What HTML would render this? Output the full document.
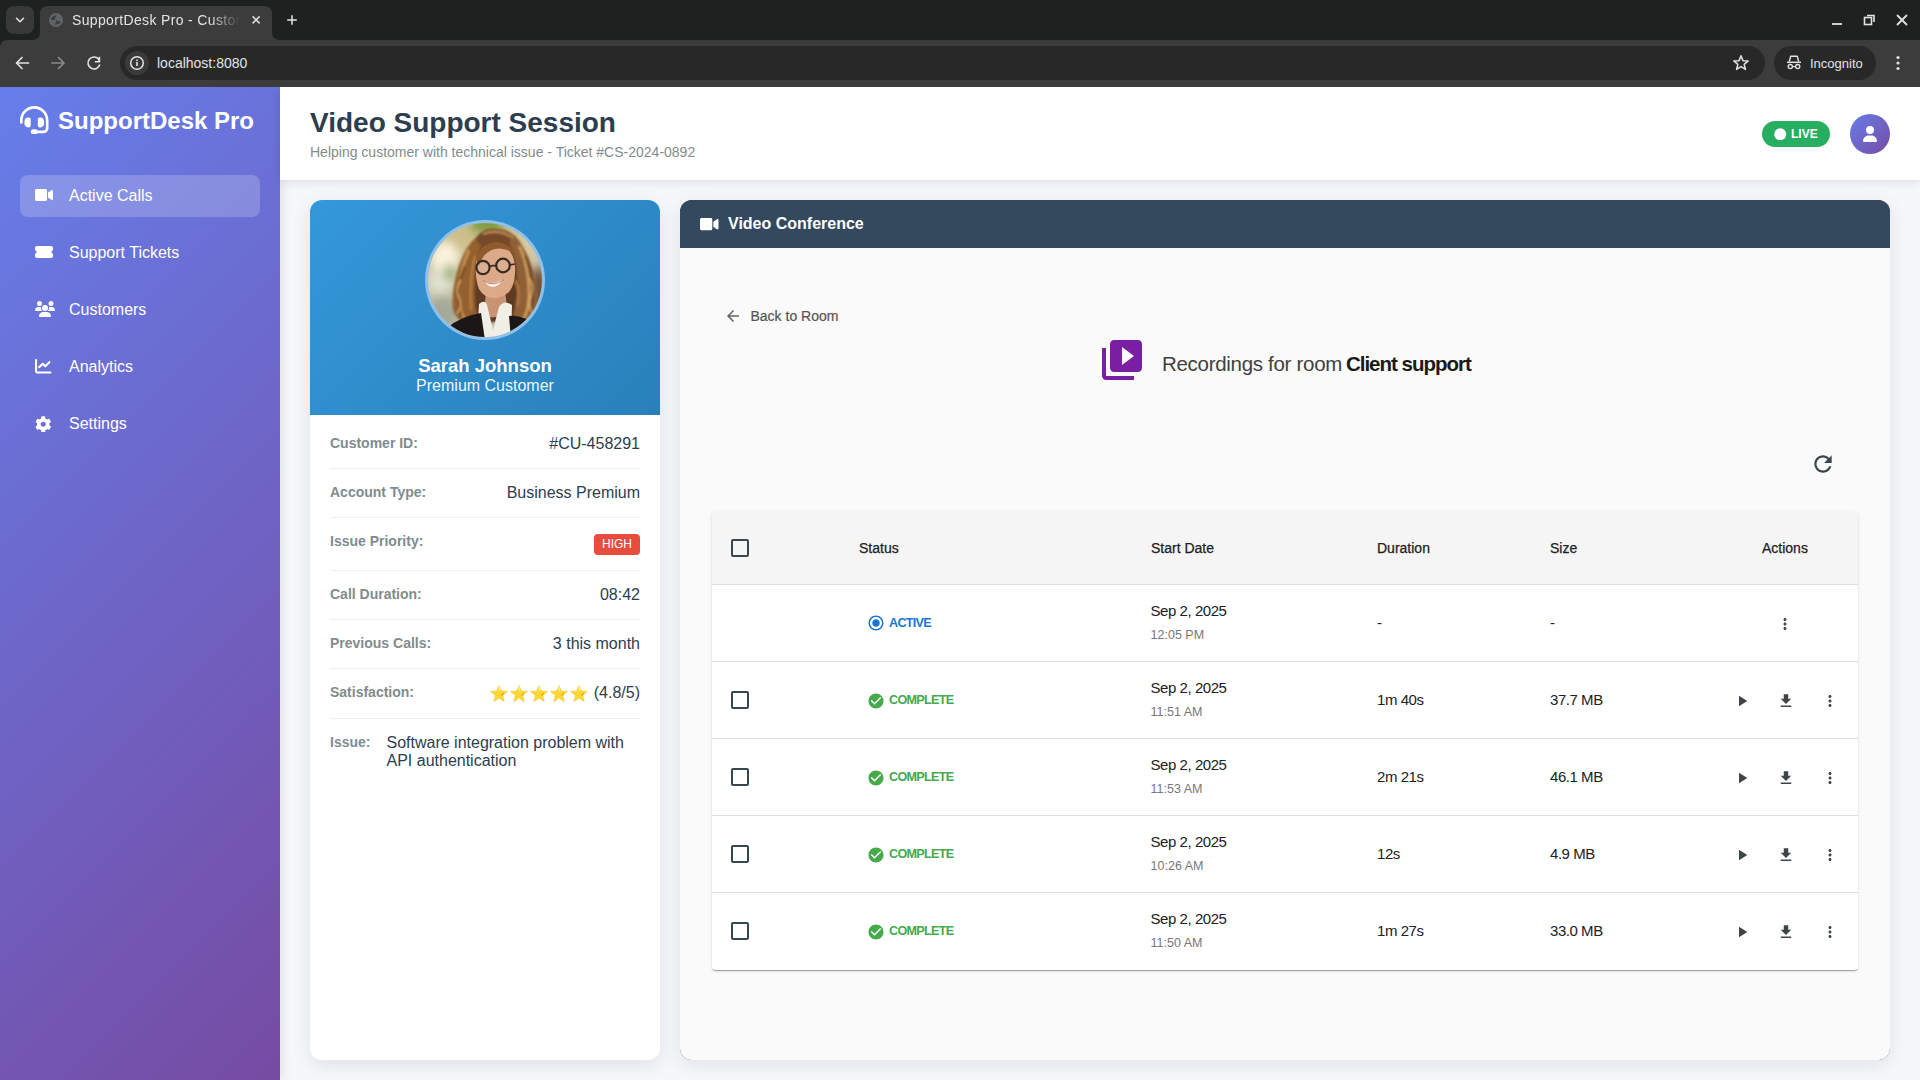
<!DOCTYPE html>
<html><head><meta charset="utf-8">
<style>
*{box-sizing:border-box;margin:0;padding:0}
html,body{width:1920px;height:1080px;overflow:hidden;font-family:"Liberation Sans",sans-serif;background:#f5f7fa}
.abs{position:absolute}
svg{display:block}
/* chrome */
#tabstrip{left:0;top:0;width:1920px;height:40px;background:#1f2020}
#toolbar{left:0;top:40px;width:1920px;height:47px;background:#3c3c3c}
#omnibox{left:120px;top:46px;width:1645px;height:34px;border-radius:17px;background:#282828}
#page{left:0;top:87px;width:1920px;height:993px;background:#f5f7fa;overflow:hidden}
/* sidebar */
#sidebar{left:0;top:0;width:280px;height:993px;background:linear-gradient(135deg,#667eea 0%,#764ba2 100%);box-shadow:2px 0 10px rgba(0,0,0,0.1);z-index:3}
.nav{position:absolute;left:20px;width:240px;height:42px;border-radius:8px;color:#fff;font-size:16px}
.nav.active{background:rgba(255,255,255,0.2)}
.nav span{position:absolute;left:49px;top:12px;line-height:18px}
.nav svg{position:absolute;fill:#fff}
/* header */
#header{left:280px;top:0;width:1640px;height:93px;background:#fff;box-shadow:0 2px 10px rgba(0,0,0,0.1);z-index:4}

/* customer card */
#card{left:310px;top:113px;width:350px;height:860px;background:#fff;border-radius:12px;box-shadow:0 5px 20px rgba(0,0,0,0.09);overflow:hidden}
#cardtop{left:0;top:0;width:350px;height:215px;background:linear-gradient(135deg,#3498db,#2980b9)}
.row{position:absolute;left:20px;width:310px;border-bottom:1px solid #ecf0f1}
.row .l{position:absolute;left:0;font-size:14px;font-weight:700;color:#7f8c8d;line-height:16px}
.row .v{position:absolute;right:0;font-size:16px;color:#2c3e50;line-height:18px}
/* video panel */
#panel{left:680px;top:113px;width:1210px;height:860px;background:#34495e;border-radius:12px;box-shadow:0 5px 20px rgba(0,0,0,0.09);overflow:hidden}
#phead{left:0;top:0;width:1210px;height:48px;background:#34495e}

.th{position:absolute;top:0;font-size:14px;font-weight:500;color:#212121;line-height:16px}
.tr{position:absolute;left:0;width:1146px;height:77px;border-top:1px solid #e0e0e0;background:#fff}
.td{position:absolute;font-size:15px;letter-spacing:-0.45px;color:#212121;line-height:17px}
.tm{position:absolute;font-size:12.5px;color:#777;line-height:14px}
.chip{position:absolute;font-size:12.6px;font-weight:700;letter-spacing:-0.7px;line-height:14px}
.ic{position:absolute}
.th{-webkit-text-stroke:0.25px #212121}
</style></head>
<body>
<!-- ============ BROWSER CHROME ============ -->
<div id="tabstrip" class="abs"></div>
<div id="toolbar" class="abs"></div>
<svg class="abs" style="left:0;top:0" width="1920" height="87">
  <path d="M0 40 L8 40 Q0 40 0 48 Z" fill="#1f2020"/>
  <!-- dropdown btn -->
  <rect x="6" y="6" width="28" height="28" rx="8" fill="#383838"/>
  <path d="M16.5 18.3 L20 21.7 L23.5 18.3" fill="none" stroke="#e3e3e3" stroke-width="1.6" stroke-linecap="round" stroke-linejoin="round"/>
  <!-- active tab -->
  <path d="M32 40 Q40 40 40 32 L40 14 Q40 6 48 6 L264 6 Q272 6 272 14 L272 32 Q272 40 280 40 Z" fill="#3c3c3c"/>
  <!-- globe -->
  <circle cx="56" cy="20" r="7" fill="#5f6368"/>
  <path d="M51.6 17.6 Q53 15.6 56.8 15.2 Q55.2 16.6 54.9 18 Q54.8 19.2 55.6 19.8 L51.2 19.9 Q51.2 18.6 51.6 17.6 Z" fill="#3c3c3c"/>
  <path d="M55.6 19.7 Q57.3 20.2 57.9 21.3 Q59 21.6 60.9 21 Q60.6 22.6 59.2 23.7 Q57.3 24.7 54.3 24.5 Q55.9 23.4 56.2 22 Q56.3 20.6 55.6 19.7 Z" fill="#3c3c3c"/>
  <!-- close x -->
  <path d="M252.6 16.4 L259.6 23.4 M259.6 16.4 L252.6 23.4" stroke="#e3e3e3" stroke-width="1.5"/>
  <!-- plus -->
  <path d="M292 15.2 L292 24.8 M287.2 20 L296.8 20" stroke="#e3e3e3" stroke-width="1.5"/>
  <!-- window controls -->
  <path d="M1832 24 L1842 24" stroke="#e3e3e3" stroke-width="1.8"/>
  <rect x="1864.5" y="17.5" width="7" height="7" fill="none" stroke="#e3e3e3" stroke-width="1.6"/>
  <path d="M1867 15.5 L1874 15.5 L1874 22" fill="none" stroke="#e3e3e3" stroke-width="1.6"/>
  <path d="M1897.5 15.5 L1906.5 24.5 M1906.5 15.5 L1897.5 24.5" stroke="#e3e3e3" stroke-width="1.8" stroke-linecap="round"/>
  <!-- back / fwd / reload -->
  <path d="M28.5 63 L16.5 63 M22 57.5 L16.5 63 L22 68.5" fill="none" stroke="#e3e3e3" stroke-width="1.7" stroke-linecap="round" stroke-linejoin="round"/>
  <path d="M52 63 L64 63 M58.5 57.5 L64 63 L58.5 68.5" fill="none" stroke="#8a8a8a" stroke-width="1.7" stroke-linecap="round" stroke-linejoin="round"/>
  <path d="M99.8 64.5 A6 6 0 1 1 98.6 59.1 L99.4 61" fill="none" stroke="#e3e3e3" stroke-width="1.6"/>
  <path d="M99.4 56.8 L99.4 61.8 L94.8 61.8" fill="none" stroke="#e3e3e3" stroke-width="1.6"/>
  <!-- omnibox -->
  <rect x="120" y="46" width="1645" height="34" rx="17" fill="#282828"/>
  <circle cx="137" cy="63" r="12" fill="#3a3a3a"/>
  <circle cx="137" cy="63" r="6.3" fill="none" stroke="#e3e3e3" stroke-width="1.5"/>
  <rect x="136.2" y="62" width="1.6" height="4" fill="#e3e3e3"/>
  <rect x="136.2" y="59.6" width="1.6" height="1.5" fill="#e3e3e3"/>
  <!-- star -->
  <path d="M1741.00 55.70 L1742.94 60.63 L1748.23 60.95 L1744.14 64.32 L1745.47 69.45 L1741.00 66.60 L1736.53 69.45 L1737.86 64.32 L1733.77 60.95 L1739.06 60.63 Z" fill="none" stroke="#e3e3e3" stroke-width="1.5" stroke-linejoin="round"/>
  <!-- incognito pill -->
  <rect x="1774" y="46" width="102" height="34" rx="17" fill="#282828"/>
  <path d="M1787 62.3 L1801 62.3" stroke="#e3e3e3" stroke-width="1.5"/>
  <path d="M1789.3 61.5 L1790.7 56.3 L1797.2 56.3 L1798.7 61.5" fill="none" stroke="#e3e3e3" stroke-width="1.4" stroke-linejoin="round"/>
  <circle cx="1790.3" cy="66.6" r="2.1" fill="none" stroke="#e3e3e3" stroke-width="1.3"/>
  <circle cx="1797.7" cy="66.6" r="2.1" fill="none" stroke="#e3e3e3" stroke-width="1.3"/>
  <path d="M1792.4 66.6 L1795.6 66.6" stroke="#e3e3e3" stroke-width="1.2"/>
  <!-- kebab -->
  <circle cx="1898" cy="57.5" r="1.6" fill="#e3e3e3"/>
  <circle cx="1898" cy="63" r="1.6" fill="#e3e3e3"/>
  <circle cx="1898" cy="68.5" r="1.6" fill="#e3e3e3"/>
</svg>
<div class="abs" style="left:72px;top:11px;width:168px;height:18px;overflow:hidden;white-space:nowrap;font-size:14px;letter-spacing:0.35px;line-height:18px;color:#e3e3e3;-webkit-mask-image:linear-gradient(90deg,#000 82%,transparent 100%)">SupportDesk Pro - Customer Support</div>
<div class="abs" style="left:157px;top:54px;font-size:14px;line-height:18px;color:#e3e3e3">localhost:8080</div>
<div class="abs" style="left:1810px;top:56px;font-size:13px;line-height:16px;color:#e3e3e3">Incognito</div>

<!-- ============ PAGE ============ -->
<div id="page" class="abs">
  <div id="sidebar" class="abs">
    <svg class="abs" style="left:20px;top:18.9px" width="28.5" height="28.5" viewBox="0 0 512 512"><path fill="#fff" d="M256 48C141.1 48 48 141.1 48 256v40c0 13.3-10.7 24-24 24s-24-10.7-24-24V256C0 114.6 114.6 0 256 0S512 114.6 512 256V400.1c0 48.6-39.4 88-88.1 88L313.6 488c-8.3 14.3-23.8 24-41.6 24H240c-26.5 0-48-21.5-48-48s21.5-48 48-48h32c17.8 0 33.3 9.7 41.6 24l110.4 .1c22.1 0 40-17.9 40-40V256c0-114.9-93.1-208-208-208zM144 208h16c17.7 0 32 14.3 32 32V352c0 17.7-14.3 32-32 32H144c-35.3 0-64-28.7-64-64V272c0-35.3 28.7-64 64-64zm224 0c35.3 0 64 28.7 64 64v48c0 35.3-28.7 64-64 64H352c-17.7 0-32-14.3-32-32V240c0-17.7 14.3-32 32-32h16z"/></svg>
    <div class="abs" style="left:58px;top:19.8px;font-size:24px;line-height:28px;font-weight:700;color:#fff">SupportDesk Pro</div>
    <div class="nav active" style="top:88px">
      <svg style="left:15px;top:12px" width="18" height="16" viewBox="0 0 576 512"><path d="M336.2 64H47.8C21.4 64 0 85.4 0 111.8v288.4C0 426.6 21.4 448 47.8 448h288.4c26.4 0 47.8-21.4 47.8-47.8V111.8c0-26.4-21.4-47.8-47.8-47.8zm189.4 37.7L416 177.3v157.4l109.6 75.5c21.2 14.6 50.4-.3 50.4-25.8V127.5c0-25.4-29.1-40.4-50.4-25.8z"/></svg>
      <span>Active Calls</span>
    </div>
    <div class="nav" style="top:145px">
      <svg style="left:15px;top:12px" width="18" height="16" viewBox="0 0 576 512"><path d="M64 64C28.7 64 0 92.7 0 128v64c0 8.8 7.4 15.7 15.7 18.6C34.5 217.1 48 235 48 256s-13.5 38.9-32.3 45.4C7.4 304.3 0 311.2 0 320v64c0 35.3 28.7 64 64 64H512c35.3 0 64-28.7 64-64V320c0-8.8-7.4-15.7-15.7-18.6C541.5 294.9 528 277 528 256s13.5-38.9 32.3-45.4c8.3-2.9 15.7-9.8 15.7-18.6V128c0-35.3-28.7-64-64-64H64z"/></svg>
      <span>Support Tickets</span>
    </div>
    <div class="nav" style="top:202px">
      <svg style="left:15px;top:12px" width="20" height="16" viewBox="0 0 640 512"><path d="M144 0a80 80 0 1 1 0 160A80 80 0 1 1 144 0zM512 0a80 80 0 1 1 0 160A80 80 0 1 1 512 0zM0 298.7C0 239.8 47.8 192 106.7 192h42.7c15.9 0 31 3.5 44.6 9.7c-1.3 7.2-1.9 14.7-1.9 22.3c0 38.2 16.8 72.5 43.3 96c-.2 0-.4 0-.7 0H21.3C9.6 320 0 310.4 0 298.7zM405.3 320c-.2 0-.4 0-.7 0c26.6-23.5 43.3-57.8 43.3-96c0-7.6-.7-15-1.9-22.3c13.6-6.3 28.7-9.7 44.6-9.7h42.7C592.2 192 640 239.8 640 298.7c0 11.8-9.6 21.3-21.3 21.3H405.3zM224 224a96 96 0 1 1 192 0 96 96 0 1 1 -192 0zM128 485.3C128 411.7 187.7 352 261.3 352H378.7C452.3 352 512 411.7 512 485.3c0 14.7-11.9 26.7-26.7 26.7H154.7c-14.7 0-26.7-11.9-26.7-26.7z"/></svg>
      <span>Customers</span>
    </div>
    <div class="nav" style="top:259px">
      <svg style="left:15px;top:11.5px" width="16.5" height="16.5" viewBox="0 0 512 512"><path d="M64 64c0-17.7-14.3-32-32-32S0 46.3 0 64V400c0 44.2 35.8 80 80 80H480c17.7 0 32-14.3 32-32s-14.3-32-32-32H80c-8.8 0-16-7.2-16-16V64zm406.6 86.6c12.5-12.5 12.5-32.8 0-45.3s-32.8-12.5-45.3 0L320 210.7l-57.4-57.4c-12.5-12.5-32.8-12.5-45.3 0l-112 112c-12.5 12.5-12.5 32.8 0 45.3s32.8 12.5 45.3 0L240 221.3l57.4 57.4c12.5 12.5 32.8 12.5 45.3 0l128-128z"/></svg>
      <span>Analytics</span>
    </div>
    <div class="nav" style="top:316px">
      <svg style="left:15px;top:12.5px" width="16.5" height="16.5" viewBox="0 0 512 512"><path d="M487.4 315.7l-42.6-24.6c4.3-23.2 4.3-47 0-70.2l42.6-24.6c4.9-2.8 7.1-8.6 5.5-14-11.1-35.6-30-67.8-54.7-94.6-3.8-4.1-10-5.1-14.8-2.3L380.8 110c-17.9-15.4-38.5-27.3-60.8-35.1V25.8c0-5.6-3.9-10.5-9.4-11.7-36.7-8.2-74.3-7.8-109.2 0-5.5 1.2-9.4 6.1-9.4 11.7V75c-22.2 7.900-42.8 19.8-60.8 35.1L88.7 85.5c-4.9-2.8-11-1.9-14.8 2.3-24.7 26.7-43.6 58.9-54.7 94.6-1.7 5.4.6 11.2 5.5 14L67.3 221c-4.3 23.2-4.3 47 0 70.2l-42.6 24.6c-4.9 2.8-7.1 8.6-5.5 14 11.1 35.6 30 67.8 54.7 94.6 3.8 4.1 10 5.1 14.8 2.3l42.6-24.6c17.9 15.4 38.5 27.3 60.8 35.1v49.2c0 5.6 3.9 10.5 9.4 11.7 36.7 8.2 74.3 7.8 109.2 0 5.5-1.200 9.4-6.1 9.4-11.7v-49.2c22.2-7.9 42.8-19.8 60.8-35.1l42.6 24.6c4.9 2.8 11 1.9 14.8-2.3 24.7-26.7 43.6-58.9 54.7-94.6 1.5-5.5-.7-11.3-5.6-14.1zM256 336c-44.1 0-80-35.9-80-80s35.9-80 80-80 80 35.9 80 80-35.9 80-80 80z"/></svg>
      <span>Settings</span>
    </div>
  </div>
<div id="card" class="abs">
    <div id="cardtop" class="abs"></div>
    <svg class="abs" style="left:115px;top:20px" width="120" height="120" viewBox="0 0 120 120">
      <defs>
        <clipPath id="pc"><circle cx="60" cy="60" r="57"/></clipPath>
        <filter id="bl" x="-30%" y="-30%" width="160%" height="160%"><feGaussianBlur stdDeviation="5"/></filter>
        <filter id="bl2" x="-20%" y="-20%" width="140%" height="140%"><feGaussianBlur stdDeviation="1.1"/></filter>
        <filter id="bl3" x="-20%" y="-20%" width="140%" height="140%"><feGaussianBlur stdDeviation="0.6"/></filter>
      </defs>
      <circle cx="60" cy="60" r="60" fill="#8ec0ea"/>
      <g clip-path="url(#pc)">
        <rect x="0" y="0" width="120" height="120" fill="#c9c3a6"/>
        <g filter="url(#bl)">
          <rect x="0" y="0" width="120" height="34" fill="#cdbf8c"/>
          <ellipse cx="62" cy="5" rx="18" ry="9" fill="#7e9c3e"/>
          <ellipse cx="20" cy="38" rx="14" ry="16" fill="#faf3dc"/>
          <ellipse cx="15" cy="62" rx="12" ry="12" fill="#dfe2d0"/>
          <ellipse cx="24" cy="52" rx="5" ry="8" fill="#8fa868"/>
          <ellipse cx="18" cy="92" rx="18" ry="16" fill="#a4aa98"/>
          <ellipse cx="104" cy="24" rx="12" ry="14" fill="#d6c8a0"/>
          <ellipse cx="114" cy="70" rx="8" ry="24" fill="#6a4a30"/>
        </g>
        <g filter="url(#bl2)">
          <path d="M46 30 Q54 14 70 14 Q88 14 94 30 L96 100 L46 104 Z" fill="#5e3a20"/>
          <path d="M60 10 Q78 6 90 16 Q100 26 104 44 L92 46 Q86 28 70 24 Q58 24 52 36 L44 34 Q48 16 60 10 Z" fill="#74492a"/>
          <path d="M50 18 Q38 30 32 52 Q26 74 28 90 Q32 102 46 106 L54 102 Q48 84 50 62 Q50 40 56 26 Z" fill="#94602f"/>
          <path d="M88 16 Q102 28 108 50 Q114 74 110 92 Q104 104 92 104 L88 96 Q94 76 92 54 Q90 34 84 22 Z" fill="#8f6036"/>
          <path d="M44 30 Q34 52 34 76 Q34 92 42 102" fill="none" stroke="#d29a58" stroke-width="2.2"/>
          <path d="M40 46 Q30 70 36 96" fill="none" stroke="#5e3618" stroke-width="1.8"/>
          <path d="M50 36 Q44 60 46 90" fill="none" stroke="#c48848" stroke-width="1.6"/>
          <path d="M94 26 Q104 46 104 74 Q104 90 98 100" fill="none" stroke="#d4a464" stroke-width="2.2"/>
          <path d="M100 36 Q112 62 106 94" fill="none" stroke="#6a3e1c" stroke-width="1.8"/>
          <path d="M58 14 Q74 8 88 18" fill="none" stroke="#c49058" stroke-width="2"/>
          <path d="M36 60 Q30 68 34 78 Q38 86 32 94" fill="none" stroke="#e0b070" stroke-width="1.4"/>
          <path d="M104 58 Q110 66 106 76 Q102 86 108 94" fill="none" stroke="#e0b070" stroke-width="1.4"/>
          <path d="M90 60 Q96 72 92 86" fill="none" stroke="#b87c42" stroke-width="2"/>
        </g>
        <g filter="url(#bl3)">
          <path d="M61 70 L80 70 L83 96 L59 98 Z" fill="#c99476"/>
          <path d="M51 46 Q51 26 69 24 Q88 25 90 46 Q91 63 84 72 Q76 78.5 68 78 Q59 77.5 54 69 Q50 59 51 46 Z" fill="#dcaa88"/>
          <path d="M51 40 Q54 24 70 22 Q84 22 90 34 Q80 27 70 29 Q58 32 54 46 Z" fill="#8e5a2e"/>
          <path d="M59.5 61 Q68 65.5 77.5 59.5 Q74 66.5 68 67 Q62 66.5 59.5 61 Z" fill="#f6f1e8"/>
          <path d="M58 60.5 Q68 67.5 79 59.5" fill="none" stroke="#b06a5a" stroke-width="0.8"/>
          <circle cx="58" cy="47.5" r="6.6" fill="rgba(210,190,170,0.25)" stroke="#3a2a22" stroke-width="2.2"/>
          <circle cx="78" cy="45.5" r="6.8" fill="rgba(210,190,170,0.25)" stroke="#3a2a22" stroke-width="2.2"/>
          <path d="M64.3 46.5 Q68 45 71.3 46" fill="none" stroke="#3a2a22" stroke-width="1.6"/>
          <path d="M84.6 45 L90 44" stroke="#3a2a22" stroke-width="1.6"/>
          <path d="M54 84 Q60 79 62 85 L68 110 L74 87 Q79 79 87 85 L86 120 L52 120 Z" fill="#f0efe6"/>
          <path d="M22 108 Q36 96 56 93 L60 120 L22 120 Z" fill="#1c1918"/>
          <path d="M84 96 Q98 94 110 106 L110 120 L86 120 Z" fill="#1c1918"/>
        </g>
      </g>
    </svg>
    <div class="abs" style="left:0;top:155px;width:350px;text-align:center;font-size:18.5px;line-height:21px;font-weight:700;color:#fff">Sarah Johnson</div>
    <div class="abs" style="left:0;top:177px;width:350px;text-align:center;font-size:16px;line-height:18px;color:rgba(255,255,255,0.95)">Premium Customer</div>
    <div class="row" style="top:219px;height:50px"><span class="l" style="top:16px">Customer ID:</span><span class="v" style="top:16px">#CU-458291</span></div>
    <div class="row" style="top:268px;height:50px"><span class="l" style="top:16px">Account Type:</span><span class="v" style="top:16px">Business Premium</span></div>
    <div class="row" style="top:318px;height:53px"><span class="l" style="top:15px">Issue Priority:</span><span class="abs" style="right:0;top:15.5px;width:46px;height:21.5px;border-radius:4px;background:#e74c3c;color:#fff;font-size:12px;line-height:21.5px;text-align:center">HIGH</span></div>
    <div class="row" style="top:370px;height:50px"><span class="l" style="top:16px">Call Duration:</span><span class="v" style="top:16px">08:42</span></div>
    <div class="row" style="top:419px;height:50px"><span class="l" style="top:16px">Previous Calls:</span><span class="v" style="top:16px">3 this month</span></div>
    <div class="row" style="top:468px;height:51px"><span class="l" style="top:16px">Satisfaction:</span><span class="v" style="top:16px">(4.8/5)</span></div>
    <svg class="abs" style="left:180.4px;top:485px" width="100" height="18"><g transform="translate(0,0)"><path d="M9 0.3 L11.3 6 L17.6 6.4 L12.7 10.4 L14.3 16.7 L9 13.3 L3.7 16.7 L5.3 10.4 L0.4 6.4 L6.7 6 Z" fill="#fdd835" stroke="#f2c230" stroke-width="0.5" stroke-linejoin="round"/><path d="M13.5 8.5 L11.8 10.3" stroke="#f0a800" stroke-width="1.3" stroke-linecap="round"/><path d="M9 1.5 L9.6 5.5" stroke="#fff59d" stroke-width="1" stroke-linecap="round"/></g><g transform="translate(20,0)"><path d="M9 0.3 L11.3 6 L17.6 6.4 L12.7 10.4 L14.3 16.7 L9 13.3 L3.7 16.7 L5.3 10.4 L0.4 6.4 L6.7 6 Z" fill="#fdd835" stroke="#f2c230" stroke-width="0.5" stroke-linejoin="round"/><path d="M13.5 8.5 L11.8 10.3" stroke="#f0a800" stroke-width="1.3" stroke-linecap="round"/><path d="M9 1.5 L9.6 5.5" stroke="#fff59d" stroke-width="1" stroke-linecap="round"/></g><g transform="translate(40,0)"><path d="M9 0.3 L11.3 6 L17.6 6.4 L12.7 10.4 L14.3 16.7 L9 13.3 L3.7 16.7 L5.3 10.4 L0.4 6.4 L6.7 6 Z" fill="#fdd835" stroke="#f2c230" stroke-width="0.5" stroke-linejoin="round"/><path d="M13.5 8.5 L11.8 10.3" stroke="#f0a800" stroke-width="1.3" stroke-linecap="round"/><path d="M9 1.5 L9.6 5.5" stroke="#fff59d" stroke-width="1" stroke-linecap="round"/></g><g transform="translate(60,0)"><path d="M9 0.3 L11.3 6 L17.6 6.4 L12.7 10.4 L14.3 16.7 L9 13.3 L3.7 16.7 L5.3 10.4 L0.4 6.4 L6.7 6 Z" fill="#fdd835" stroke="#f2c230" stroke-width="0.5" stroke-linejoin="round"/><path d="M13.5 8.5 L11.8 10.3" stroke="#f0a800" stroke-width="1.3" stroke-linecap="round"/><path d="M9 1.5 L9.6 5.5" stroke="#fff59d" stroke-width="1" stroke-linecap="round"/></g><g transform="translate(80,0)"><path d="M9 0.3 L11.3 6 L17.6 6.4 L12.7 10.4 L14.3 16.7 L9 13.3 L3.7 16.7 L5.3 10.4 L0.4 6.4 L6.7 6 Z" fill="#fdd835" stroke="#f2c230" stroke-width="0.5" stroke-linejoin="round"/><path d="M13.5 8.5 L11.8 10.3" stroke="#f0a800" stroke-width="1.3" stroke-linecap="round"/><path d="M9 1.5 L9.6 5.5" stroke="#fff59d" stroke-width="1" stroke-linecap="round"/></g></svg>
    <div class="abs" style="left:20px;top:534px;font-size:14px;font-weight:700;color:#7f8c8d;line-height:16px">Issue:</div>
    <div class="abs" style="left:76.5px;top:534px;width:250px;font-size:16px;color:#2c3e50;line-height:18px">Software integration problem with API authentication</div>
  </div>
  <div id="panel" class="abs">
    <div class="abs" style="left:0;top:48px;width:1210px;height:812px;background:#fafafa"></div>
    <div id="phead" class="abs">
      <svg class="abs" style="left:20px;top:16px" width="18.5" height="16.4" viewBox="0 0 576 512" fill="#fff"><path d="M336.2 64H47.8C21.4 64 0 85.4 0 111.8v288.4C0 426.6 21.4 448 47.8 448h288.4c26.4 0 47.8-21.4 47.8-47.8V111.8c0-26.4-21.4-47.8-47.8-47.8zm189.4 37.7L416 177.3v157.4l109.6 75.5c21.2 14.6 50.4-.3 50.4-25.8V127.5c0-25.4-29.1-40.4-50.4-25.8z"/></svg>
      <div class="abs" style="left:48px;top:15px;font-size:16px;line-height:18px;font-weight:700;color:#fff">Video Conference</div>
    </div>
    <svg class="ic" style="left:44px;top:107px" width="18" height="18" viewBox="0 0 24 24" fill="#666"><path d="M20 11H7.83l5.59-5.59L12 4l-8 8 8 8 1.41-1.41L7.83 13H20v-2z"/></svg>
    <div class="abs" style="left:70.5px;top:108px;font-size:14px;line-height:16px;color:#555;-webkit-text-stroke:0.2px #555">Back to Room</div>
    <svg class="abs" style="left:417.5px;top:136px" width="48" height="48" viewBox="0 0 24 24" fill="#7b1fa2"><path d="M4 6H2v14c0 1.1.9 2 2 2h14v-2H4V6zm16-4H8c-1.1 0-2 .9-2 2v12c0 1.1.9 2 2 2h12c1.1 0 2-.9 2-2V4c0-1.1-.9-2-2-2zm-8 12.5v-9l6 4.5-6 4.5z"/></svg>
    <div class="abs" style="left:482px;top:151.5px;font-size:20.5px;letter-spacing:-0.3px;line-height:23px;color:#404040;white-space:nowrap">Recordings for room <b style="letter-spacing:-1px;margin-left:-1.5px;color:#1a1a1a">Client support</b></div>
    <svg class="ic" style="left:1129.5px;top:251px" width="26" height="26" viewBox="0 0 24 24" fill="#37474f"><path d="M17.65 6.35C16.2 4.9 14.21 4 12 4c-4.42 0-7.99 3.58-7.99 8s3.57 8 7.99 8c3.73 0 6.84-2.55 7.73-6h-2.08c-.82 2.33-3.04 4-5.65 4-3.31 0-6-2.690-6-6s2.69-6 6-6c1.66 0 3.14.69 4.22 1.78L13 11h7V4l-2.35 2.35z"/></svg>
    <div class="abs" style="left:32px;top:311px;width:1146px;height:459px;border-radius:4px;overflow:hidden;background:#fff;box-shadow:0 2px 1px -1px rgba(0,0,0,0.2),0 1px 1px 0 rgba(0,0,0,0.14),0 1px 3px 0 rgba(0,0,0,0.12)">
      <div class="abs" style="left:0;top:0;width:1146px;height:73px;background:#f5f5f5">
        <svg class="ic" style="left:16px;top:24.5px" width="24" height="24" viewBox="0 0 24 24" fill="#37474f"><path d="M19 5v14H5V5h14m0-2H5c-1.11 0-2 .9-2 2v14c0 1.1.89 2 2 2h14c1.1 0 2-.9 2-2V5c0-1.1-.9-2-2-2z"/></svg>
        <span class="th" style="left:147px;top:29px">Status</span>
        <span class="th" style="left:439px;top:29px">Start Date</span>
        <span class="th" style="left:665px;top:29px">Duration</span>
        <span class="th" style="left:838px;top:29px">Size</span>
        <span class="th" style="left:1050px;top:29px">Actions</span>
      </div>
<div class="tr" style="top:73px"><svg class="ic" style="left:155px;top:29px" width="18" height="18" viewBox="0 0 24 24" fill="#1976d2"><path d="M12 7c-2.76 0-5 2.24-5 5s2.24 5 5 5 5-2.24 5-5-2.24-5-5-5zm0-5C6.48 2 2 6.48 2 12s4.48 10 10 10 10-4.48 10-10S17.52 2 12 2zm0 18c-4.42 0-8-3.58-8-8s3.58-8 8-8 8 3.58 8 8-3.58 8-8 8z"/></svg><span class="chip" style="left:177px;top:31px;color:#1976d2">ACTIVE</span><span class="td" style="left:438.5px;top:16.5px">Sep 2, 2025</span><span class="tm" style="left:438.6px;top:43.3px">12:05 PM</span><span class="td" style="left:665px;top:28.5px">-</span><span class="td" style="left:838px;top:28.5px">-</span><svg class="ic" style="left:1064px;top:29.5px" width="18" height="18" viewBox="0 0 24 24" fill="#3d4548"><path d="M12 8c1.1 0 2-.9 2-2s-.9-2-2-2-2 .9-2 2 .9 2 2 2zm0 2c-1.1 0-2 .9-2 2s.9 2 2 2 2-.9 2-2-.9-2-2-2zm0 6c-1.1 0-2 .9-2 2s.9 2 2 2 2-.9 2-2-.9-2-2-2z"/></svg></div>
<div class="tr" style="top:150px"><svg class="ic" style="left:16px;top:26px" width="24" height="24" viewBox="0 0 24 24" fill="#37474f"><path d="M19 5v14H5V5h14m0-2H5c-1.11 0-2 .9-2 2v14c0 1.1.89 2 2 2h14c1.1 0 2-.9 2-2V5c0-1.1-.9-2-2-2z"/></svg><svg class="ic" style="left:154.79999999999995px;top:29.5px" width="18" height="18" viewBox="0 0 24 24" fill="#46a94a"><path d="M12 2C6.48 2 2 6.48 2 12s4.48 10 10 10 10-4.48 10-10S17.52 2 12 2zm-2 15l-5-5 1.41-1.41L10 14.17l7.59-7.59L19 8l-9 9z"/></svg><span class="chip" style="left:177px;top:31px;color:#46a94a">COMPLETE</span><span class="td" style="left:438.5px;top:16.5px">Sep 2, 2025</span><span class="tm" style="left:438.6px;top:43.3px">11:51 AM</span><span class="td" style="left:665px;top:28.5px">1m 40s</span><span class="td" style="left:838px;top:28.5px">37.7 MB</span><svg class="ic" style="left:1021px;top:29.5px" width="18" height="18" viewBox="0 0 24 24" fill="#3d4548"><path d="M8 5v14l11-7z"/></svg><svg class="ic" style="left:1065px;top:29.5px" width="18" height="18" viewBox="0 0 24 24" fill="#3d4548"><path d="M19 9h-4V3H9v6H5l7 7 7-7zM5 18v2h14v-2H5z"/></svg><svg class="ic" style="left:1109px;top:29.5px" width="18" height="18" viewBox="0 0 24 24" fill="#3d4548"><path d="M12 8c1.1 0 2-.9 2-2s-.9-2-2-2-2 .9-2 2 .9 2 2 2zm0 2c-1.1 0-2 .9-2 2s.9 2 2 2 2-.9 2-2-.9-2-2-2zm0 6c-1.1 0-2 .9-2 2s.9 2 2 2 2-.9 2-2-.9-2-2-2z"/></svg></div>
<div class="tr" style="top:227px"><svg class="ic" style="left:16px;top:26px" width="24" height="24" viewBox="0 0 24 24" fill="#37474f"><path d="M19 5v14H5V5h14m0-2H5c-1.11 0-2 .9-2 2v14c0 1.1.89 2 2 2h14c1.1 0 2-.9 2-2V5c0-1.1-.9-2-2-2z"/></svg><svg class="ic" style="left:154.79999999999995px;top:29.5px" width="18" height="18" viewBox="0 0 24 24" fill="#46a94a"><path d="M12 2C6.48 2 2 6.48 2 12s4.48 10 10 10 10-4.48 10-10S17.52 2 12 2zm-2 15l-5-5 1.41-1.41L10 14.17l7.59-7.59L19 8l-9 9z"/></svg><span class="chip" style="left:177px;top:31px;color:#46a94a">COMPLETE</span><span class="td" style="left:438.5px;top:16.5px">Sep 2, 2025</span><span class="tm" style="left:438.6px;top:43.3px">11:53 AM</span><span class="td" style="left:665px;top:28.5px">2m 21s</span><span class="td" style="left:838px;top:28.5px">46.1 MB</span><svg class="ic" style="left:1021px;top:29.5px" width="18" height="18" viewBox="0 0 24 24" fill="#3d4548"><path d="M8 5v14l11-7z"/></svg><svg class="ic" style="left:1065px;top:29.5px" width="18" height="18" viewBox="0 0 24 24" fill="#3d4548"><path d="M19 9h-4V3H9v6H5l7 7 7-7zM5 18v2h14v-2H5z"/></svg><svg class="ic" style="left:1109px;top:29.5px" width="18" height="18" viewBox="0 0 24 24" fill="#3d4548"><path d="M12 8c1.1 0 2-.9 2-2s-.9-2-2-2-2 .9-2 2 .9 2 2 2zm0 2c-1.1 0-2 .9-2 2s.9 2 2 2 2-.9 2-2-.9-2-2-2zm0 6c-1.1 0-2 .9-2 2s.9 2 2 2 2-.9 2-2-.9-2-2-2z"/></svg></div>
<div class="tr" style="top:304px"><svg class="ic" style="left:16px;top:26px" width="24" height="24" viewBox="0 0 24 24" fill="#37474f"><path d="M19 5v14H5V5h14m0-2H5c-1.11 0-2 .9-2 2v14c0 1.1.89 2 2 2h14c1.1 0 2-.9 2-2V5c0-1.1-.9-2-2-2z"/></svg><svg class="ic" style="left:154.79999999999995px;top:29.5px" width="18" height="18" viewBox="0 0 24 24" fill="#46a94a"><path d="M12 2C6.48 2 2 6.48 2 12s4.48 10 10 10 10-4.48 10-10S17.52 2 12 2zm-2 15l-5-5 1.41-1.41L10 14.17l7.59-7.59L19 8l-9 9z"/></svg><span class="chip" style="left:177px;top:31px;color:#46a94a">COMPLETE</span><span class="td" style="left:438.5px;top:16.5px">Sep 2, 2025</span><span class="tm" style="left:438.6px;top:43.3px">10:26 AM</span><span class="td" style="left:665px;top:28.5px">12s</span><span class="td" style="left:838px;top:28.5px">4.9 MB</span><svg class="ic" style="left:1021px;top:29.5px" width="18" height="18" viewBox="0 0 24 24" fill="#3d4548"><path d="M8 5v14l11-7z"/></svg><svg class="ic" style="left:1065px;top:29.5px" width="18" height="18" viewBox="0 0 24 24" fill="#3d4548"><path d="M19 9h-4V3H9v6H5l7 7 7-7zM5 18v2h14v-2H5z"/></svg><svg class="ic" style="left:1109px;top:29.5px" width="18" height="18" viewBox="0 0 24 24" fill="#3d4548"><path d="M12 8c1.1 0 2-.9 2-2s-.9-2-2-2-2 .9-2 2 .9 2 2 2zm0 2c-1.1 0-2 .9-2 2s.9 2 2 2 2-.9 2-2-.9-2-2-2zm0 6c-1.1 0-2 .9-2 2s.9 2 2 2 2-.9 2-2-.9-2-2-2z"/></svg></div>
<div class="tr" style="top:381px"><svg class="ic" style="left:16px;top:26px" width="24" height="24" viewBox="0 0 24 24" fill="#37474f"><path d="M19 5v14H5V5h14m0-2H5c-1.11 0-2 .9-2 2v14c0 1.1.89 2 2 2h14c1.1 0 2-.9 2-2V5c0-1.1-.9-2-2-2z"/></svg><svg class="ic" style="left:154.79999999999995px;top:29.5px" width="18" height="18" viewBox="0 0 24 24" fill="#46a94a"><path d="M12 2C6.48 2 2 6.48 2 12s4.48 10 10 10 10-4.48 10-10S17.52 2 12 2zm-2 15l-5-5 1.41-1.41L10 14.17l7.59-7.59L19 8l-9 9z"/></svg><span class="chip" style="left:177px;top:31px;color:#46a94a">COMPLETE</span><span class="td" style="left:438.5px;top:16.5px">Sep 2, 2025</span><span class="tm" style="left:438.6px;top:43.3px">11:50 AM</span><span class="td" style="left:665px;top:28.5px">1m 27s</span><span class="td" style="left:838px;top:28.5px">33.0 MB</span><svg class="ic" style="left:1021px;top:29.5px" width="18" height="18" viewBox="0 0 24 24" fill="#3d4548"><path d="M8 5v14l11-7z"/></svg><svg class="ic" style="left:1065px;top:29.5px" width="18" height="18" viewBox="0 0 24 24" fill="#3d4548"><path d="M19 9h-4V3H9v6H5l7 7 7-7zM5 18v2h14v-2H5z"/></svg><svg class="ic" style="left:1109px;top:29.5px" width="18" height="18" viewBox="0 0 24 24" fill="#3d4548"><path d="M12 8c1.1 0 2-.9 2-2s-.9-2-2-2-2 .9-2 2 .9 2 2 2zm0 2c-1.1 0-2 .9-2 2s.9 2 2 2 2-.9 2-2-.9-2-2-2zm0 6c-1.1 0-2 .9-2 2s.9 2 2 2 2-.9 2-2-.9-2-2-2z"/></svg></div>
    </div>
  </div>
  <div id="header" class="abs">
    <div class="abs" style="left:30px;top:20px;font-size:28px;line-height:32px;font-weight:700;color:#2c3e50">Video Support Session</div>
    <div class="abs" style="left:30px;top:57px;font-size:14px;line-height:16px;color:#7f8c8d">Helping customer with technical issue - Ticket #CS-2024-0892</div>
    <div class="abs" style="left:1482px;top:34px;width:68px;height:26px;border-radius:13px;background:#27ae60"></div>
    <svg class="abs" style="left:1494px;top:40.5px" width="13" height="13"><circle cx="6.25" cy="6.25" r="6" fill="#fff"/></svg>
    <div class="abs" style="left:1511px;top:40px;font-size:12px;line-height:14px;font-weight:700;color:#fff">LIVE</div>
    <div class="abs" style="left:1570px;top:27px;width:40px;height:40px;border-radius:50%;background:linear-gradient(135deg,#667eea,#764ba2)"></div>
    <svg class="abs" style="left:1583px;top:39px" width="14" height="16" viewBox="0 0 448 512"><path fill="#fff" d="M224 256A128 128 0 1 0 224 0a128 128 0 1 0 0 256zm-45.7 48C79.8 304 0 383.8 0 482.3C0 498.7 13.3 512 29.7 512H418.3c16.4 0 29.7-13.3 29.7-29.7C448 383.8 368.2 304 269.7 304H178.3z"/></svg>
  </div>
</div>
</body></html>
